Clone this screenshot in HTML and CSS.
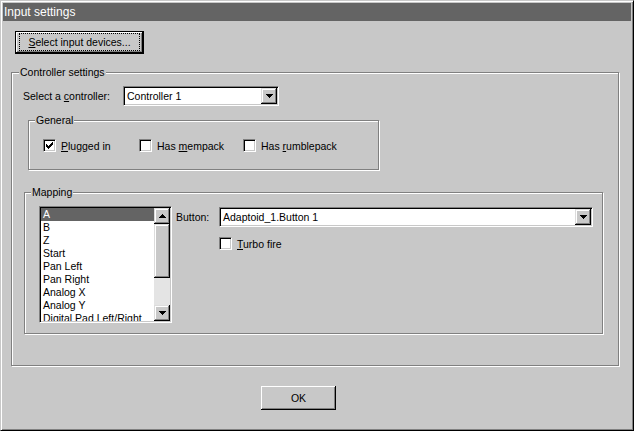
FILE: index.html
```html
<!DOCTYPE html>
<html>
<head>
<meta charset="utf-8">
<title>Input settings</title>
<link rel="stylesheet" href="styles.css">
</head>
<body>
<div class="window">
  <div class="inner">
    <div class="titlebar">Input settings</div>
    <div class="client">
      <div class="top-row">
        <button class="btn btn-default"><span class="focus"><u>S</u>elect input devices...</span></button>
      </div>

      <div class="group controller">
        <span class="legend">Controller settings</span>
        <div class="ctl-row">
          <span class="ctl-label">Select a <u>c</u>ontroller:</span>
          <div class="combo combo-ctl">
            <span class="combo-text">Controller 1</span>
            <span class="drop"><svg width="7" height="4" viewBox="0 0 7 4" shape-rendering="crispEdges"><rect x="0" y="0" width="7" height="1"/><rect x="1" y="1" width="5" height="1"/><rect x="2" y="2" width="3" height="1"/><rect x="3" y="3" width="1" height="1"/></svg></span>
          </div>
        </div>

        <div class="group general">
          <span class="legend">General</span>
          <div class="checks">
            <div class="check"><span class="box"><svg width="7" height="7" viewBox="0 0 7 7" shape-rendering="crispEdges"><rect x="0" y="2" width="1" height="3"/><rect x="1" y="3" width="1" height="3"/><rect x="2" y="4" width="1" height="3"/><rect x="3" y="3" width="1" height="3"/><rect x="4" y="2" width="1" height="3"/><rect x="5" y="1" width="1" height="3"/><rect x="6" y="0" width="1" height="3"/></svg></span><span class="check-text"><u>P</u>lugged in</span></div>
            <div class="check"><span class="box"></span><span class="check-text">Has <u>m</u>empack</span></div>
            <div class="check"><span class="box"></span><span class="check-text">Has <u>r</u>umblepack</span></div>
          </div>
        </div>

        <div class="group mapping">
          <span class="legend">Mapping</span>
          <div class="map-body">
            <div class="listbox">
              <ul class="items">
                <li class="sel">A</li>
                <li>B</li>
                <li>Z</li>
                <li>Start</li>
                <li>Pan Left</li>
                <li>Pan Right</li>
                <li>Analog X</li>
                <li>Analog Y</li>
                <li>Digital Pad Left/Right</li>
              </ul>
              <div class="scrollbar">
                <span class="sbtn"><svg width="7" height="4" viewBox="0 0 7 4" shape-rendering="crispEdges"><rect x="3" y="0" width="1" height="1"/><rect x="2" y="1" width="3" height="1"/><rect x="1" y="2" width="5" height="1"/><rect x="0" y="3" width="7" height="1"/></svg></span>
                <span class="thumb"></span>
                <span class="track"></span>
                <span class="sbtn"><svg width="7" height="4" viewBox="0 0 7 4" shape-rendering="crispEdges"><rect x="0" y="0" width="7" height="1"/><rect x="1" y="1" width="5" height="1"/><rect x="2" y="2" width="3" height="1"/><rect x="3" y="3" width="1" height="1"/></svg></span>
              </div>
            </div>
            <div class="map-right">
              <div class="map-row">
                <span class="map-label">Button:</span>
                <div class="combo combo-map">
                  <span class="combo-text">Adaptoid_1.Button 1</span>
                  <span class="drop"><svg width="7" height="4" viewBox="0 0 7 4" shape-rendering="crispEdges"><rect x="0" y="0" width="7" height="1"/><rect x="1" y="1" width="5" height="1"/><rect x="2" y="2" width="3" height="1"/><rect x="3" y="3" width="1" height="1"/></svg></span>
                </div>
              </div>
              <div class="check turbo"><span class="box"></span><span class="check-text"><u>T</u>urbo fire</span></div>
            </div>
          </div>
        </div>
      </div>

      <div class="footer">
        <button class="btn btn-ok">OK</button>
      </div>
    </div>
  </div>
</div>
</body>
</html>
```

FILE: styles.css
```css
* {
  box-sizing: border-box;
}

html, body {
  margin: 0;
  padding: 0;
}

body {
  width: 634px;
  height: 431px;
  overflow: hidden;
  background: #c8c8c8;
  font-family: "Liberation Sans", Arial, sans-serif;
  font-size: 10.5px;
  color: #000;
}

.window {
  width: 634px;
  height: 431px;
  border: 1px solid;
  border-color: #c8c8c8 #000 #000 #c8c8c8;
  padding: 1px;
  background: #c8c8c8;
  box-shadow: inset 1px 1px 0 #fff, inset -1px -1px 0 #808080;
}

.inner {
  height: 100%;
  padding: 1px;
  display: flex;
  flex-direction: column;
}

.titlebar {
  height: 18px;
  flex: 0 0 18px;
  background: #646464;
  color: #fff;
  font-size: 12px;
  line-height: 18px;
  padding-left: 1px;
  white-space: nowrap;
}

.client {
  flex: 1;
  display: flex;
  flex-direction: column;
  align-items: flex-start;
}

/* buttons */
.btn {
  font: inherit;
  color: #000;
  background: #c8c8c8;
  margin: 0;
  padding: 0;
  border: 0;
  display: flex;
  align-items: center;
  justify-content: center;
}

.top-row {
  margin: 10px 0 0 12px;
}

.btn-default {
  width: 129px;
  height: 23px;
  border: 1px solid #000;
  padding: 1px 3px 2px 3px;
  box-shadow: inset -1px -1px 0 #000, inset 1px 1px 0 #fff, inset -2px -2px 0 #808080;
}

.focus {
  width: 100%;
  height: 100%;
  border: 1px dotted #000;
  display: flex;
  align-items: center;
  justify-content: center;
  white-space: nowrap;
}

.btn-ok {
  width: 75px;
  height: 24px;
  box-shadow: inset -1px -1px 0 #000, inset 1px 1px 0 #fff, inset -2px -2px 0 #808080;
}

.footer {
  margin: 20px 0 0 258px;
}

/* group boxes */
.group {
  position: relative;
  border: 1px solid #808080;
  box-shadow: inset 1px 1px 0 #fff, 1px 1px 0 #fff;
}

.legend {
  position: absolute;
  top: -7px;
  left: 6px;
  padding: 0 1px;
  line-height: 13px;
  background: #c8c8c8;
  white-space: nowrap;
}

.controller {
  margin: 18px 0 0 8px;
  width: 608px;
  height: 294px;
}

.controller > .legend {
  left: 7px;
}

.ctl-row {
  display: flex;
  align-items: center;
  height: 20px;
  margin: 13px 0 0 11px;
}

.ctl-label {
  width: 100px;
  white-space: nowrap;
}

/* combo boxes */
.combo {
  display: flex;
  align-items: center;
  height: 20px;
  background: #fff;
  border: 1px solid;
  border-color: #808080 #fff #fff #808080;
  box-shadow: inset 1px 1px 0 #000, inset -1px -1px 0 #c8c8c8;
  padding: 1px;
}

.combo-ctl {
  width: 156px;
}

.combo-map {
  width: 374px;
}

.combo-text {
  flex: 1;
  padding-left: 2px;
  white-space: nowrap;
  overflow: hidden;
}

.drop,
.sbtn {
  width: 16px;
  height: 16px;
  flex: 0 0 16px;
  display: flex;
  align-items: center;
  justify-content: center;
  background: #c8c8c8;
  box-shadow: inset -1px -1px 0 #000, inset 1px 1px 0 #dcdcdc, inset -2px -2px 0 #808080, inset 2px 2px 0 #fff;
}

.drop svg,
.sbtn svg {
  fill: #000;
  display: block;
}

/* general */
.general {
  margin: 14px 0 0 16px;
  width: 351px;
  height: 50px;
}

.checks {
  display: grid;
  grid-template-columns: 96px 104px auto;
  margin: 18px 0 0 14px;
}

.check {
  display: flex;
  align-items: center;
  height: 13px;
  gap: 5px;
  white-space: nowrap;
}

.box {
  width: 13px;
  height: 13px;
  flex: 0 0 13px;
  background: #fff;
  border: 1px solid;
  border-color: #808080 #fff #fff #808080;
  box-shadow: inset 1px 1px 0 #000, inset -1px -1px 0 #c8c8c8;
  padding: 2px;
  display: flex;
}

.box svg {
  fill: #000;
  display: block;
}

/* mapping */
.mapping {
  margin: 22px 0 0 12px;
  width: 579px;
  height: 142px;
}

.map-body {
  display: flex;
  align-items: flex-start;
  margin: 13px 0 0 14px;
}

.listbox {
  width: 133px;
  height: 117px;
  display: flex;
  background: #fff;
  border: 1px solid;
  border-color: #808080 #fff #fff #808080;
  box-shadow: inset 1px 1px 0 #000, inset -1px -1px 0 #c8c8c8;
  padding: 1px;
}

.items {
  list-style: none;
  margin: 0;
  padding: 0;
  flex: 1;
  overflow: hidden;
}

.items li {
  height: 13px;
  line-height: 13px;
  padding-left: 2px;
  white-space: nowrap;
}

.items li.sel {
  background: #646464;
  color: #fff;
}

.scrollbar {
  width: 16px;
  flex: 0 0 16px;
  display: flex;
  flex-direction: column;
}

.thumb {
  flex: 0 0 54px;
  background: #c8c8c8;
  box-shadow: inset -1px -1px 0 #000, inset 1px 1px 0 #dcdcdc, inset -2px -2px 0 #808080, inset 2px 2px 0 #fff;
}

.track {
  flex: 1;
  background: #e4e4e4;
}

.map-right {
  margin-top: 1px;
  display: flex;
  flex-direction: column;
}

.map-row {
  display: flex;
  align-items: center;
}

.map-label {
  width: 47px;
  padding-left: 4px;
}

.turbo {
  margin: 10px 0 0 47px;
}
```
